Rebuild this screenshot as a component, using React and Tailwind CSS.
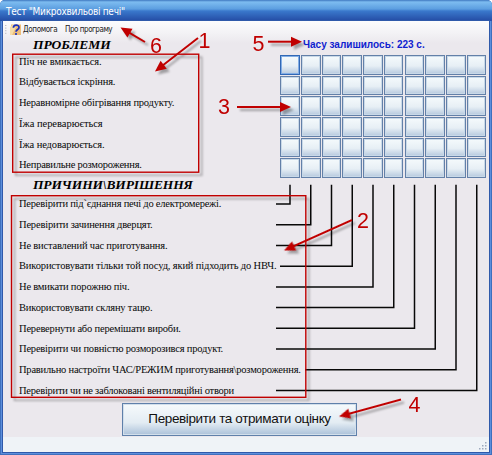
import React from "react";

const problems = [
  ["Піч не вмикається.", "tracking-[-0.08px]"],
  ["Відбувається іскріння.", "tracking-[-0.19px]"],
  ["Неравномірне обігрівання продукту.", "tracking-[-0.21px]"],
  ["Їжа переварюється", "tracking-[-0.03px]"],
  ["Їжа недоварюється.", "tracking-[-0.1px]"],
  ["Неправильне розмороження.", "tracking-[-0.23px]"],
];

const causes = [
  ["Перевірити під`єднання печі до електромережі.", "tracking-[-0.23px]"],
  ["Перевірити зачинення дверцят.", "tracking-[-0.19px]"],
  ["Не виставлений час приготування.", "tracking-[-0.19px]"],
  ["Використовувати тільки той посуд, який підходить до НВЧ.", "tracking-[-0.16px]"],
  ["Не вмикати порожню піч.", "tracking-[-0.2px]"],
  ["Використовувати скляну тацю.", "tracking-[-0.175px]"],
  ["Перевернути або перемішати вироби.", "tracking-[-0.19px]"],
  ["Перевірити чи повністю розморозився продукт.", "tracking-[-0.2px]"],
  ["Правильно настроїти ЧАС/РЕЖИМ приготування\\розмороження.", "tracking-[-0.21px]"],
  ["Перевірити чи не заблоковані вентиляційні отвори", "tracking-[-0.24px]"],
];

const lineStarts = [0, 0, 0, 4, 0, 0, 0, 0, 29, 0];

function List({ items }) {
  return (
    <ul className="pl-4 font-['Liberation_Serif',serif] text-[10.5px] text-[#080808]">
      {items.map(([text, tracking]) => (
        <li key={text} className={`flex h-[20.75px] items-center whitespace-nowrap ${tracking}`}>
          {text}
        </li>
      ))}
    </ul>
  );
}

function Cell({ focused }) {
  return (
    <button
      className={`border bg-linear-to-b from-[#f5fafc] via-[#e7eff5] via-55% to-[#b6c9de] ${
        focused
          ? "border-[#3168b5] shadow-[inset_0_0_0_1px_#83aee5]"
          : "border-[#6380a8] shadow-[inset_0_0_0_1px_#c9d9e8]"
      }`}
    />
  );
}

function Connectors() {
  return (
    <svg className="block" width="213" height="222" viewBox="276 184 213 222" fill="none" stroke="#080808" strokeWidth="1.5">
      {lineStarts.map((offset, i) => {
        const x = 290 + i * 20.75;
        const y = 204.1 + i * 20.7;
        return <path key={i} d={`M${x} 184.7V${y}H${276 + offset}`} />;
      })}
    </svg>
  );
}

function Arrow({ x1, y1, x2, y2 }) {
  const len = Math.hypot(x2 - x1, y2 - y1);
  const angle = (Math.atan2(y2 - y1, x2 - x1) * 180) / Math.PI;
  return (
    <g transform={`translate(${x1} ${y1}) rotate(${angle})`}>
      <path d={`M0 0H${len - 8}`} stroke="#c00000" strokeWidth="2" />
      <path d={`M${len} 0L${len - 11} -5V5Z`} fill="#c00000" />
    </g>
  );
}

function Annotations() {
  return (
    <svg className="pointer-events-none absolute inset-0" width="492" height="455" fill="none">
      <g className="[filter:drop-shadow(3px_3px_1.2px_rgba(0,0,0,0.32))]">
        <rect x="12.7" y="54.2" width="186" height="118" stroke="#c00000" strokeWidth="1.4" />
        <rect x="11.5" y="195.7" width="294.3" height="201.6" stroke="#c00000" strokeWidth="1.4" />
        <Arrow x1={198} y1={38} x2={155} y2={71.5} />
        <Arrow x1={145} y1={42} x2={120.5} y2={27.5} />
        <Arrow x1={352} y1={220} x2={284} y2={250.5} />
        <Arrow x1={237} y1={107} x2={291} y2={107} />
        <Arrow x1={401} y1={399.5} x2={339} y2={416.5} />
        <Arrow x1={268} y1={41.7} x2={302} y2={41.7} />
      </g>
      <g fill="#c00000" fontFamily="'Liberation Sans', sans-serif" fontSize="21.5">
        <text x="198.5" y="47.5">1</text>
        <text x="150" y="53">6</text>
        <text x="357" y="228">2</text>
        <text x="218" y="114">3</text>
        <text x="408.5" y="411.5">4</text>
        <text x="252.5" y="50.5">5</text>
      </g>
    </svg>
  );
}

export default function App() {
  return (
    <div className="h-[455px] w-[492px] bg-white">
      <div className="relative flex h-[455px] w-[492px] flex-col overflow-hidden rounded-t-[5px] bg-[#5d8fdc] shadow-[inset_0_0_0_1px_#3f70bd]">
        <header className="flex h-[21px] shrink-0 items-center bg-[linear-gradient(#3f78c0_0px,#7dbcf0_2px,#5c9ee0_9px,#3a78cc_11px,#2650a8_20px)] pt-[2px] pl-1.5 font-['DejaVu_Sans_Condensed','DejaVu_Sans',sans-serif] text-[10px] tracking-[-0.27px] whitespace-nowrap text-white">
          Тест "Микрохвильові печі"
        </header>
        <div className="mx-[3px] flex h-[431px] flex-col bg-[linear-gradient(#fcfcfd_0px,#f3f2f5_12px,#ebe8ed_22px)] shadow-[0_0_0_1px_#2f59aa]">
          <nav className="flex h-[17px] shrink-0 items-center pl-[2px] font-['DejaVu_Sans_Condensed','DejaVu_Sans',sans-serif] text-[8px] whitespace-nowrap text-[#222]">
            <svg width="16" height="15" viewBox="0 0 16 15" className="shrink-0">
              <path d="M.8 3v9" stroke="#aaa9b0" strokeWidth="1" strokeDasharray="1 1.6" />
              <path d="M6 2.5h10V13H6z" fill="#edbd79" />
              <path d="M5 5l4-3 2 3-4 8H5z" fill="#f7dda8" />
              <path d="M8.4 5.8C8.4 2.3 14 2.3 14 5.4c0 2-3 2.2-3 4.4" fill="none" stroke="#1930bd" strokeWidth="1.7" />
              <circle cx="11" cy="12" r="1.1" fill="#1930bd" />
            </svg>
            <span className="ml-[2px] w-[34px] tracking-[-0.36px]">Допомога</span>
            <span className="ml-[8px] tracking-[-0.47px]">Про програму</span>
          </nav>
          <main className="flex h-[363px] shrink-0">
            <section className="w-[273px] shrink-0">
              <h1 className="flex h-[13px] items-center pt-[2px] pl-[30px] font-['Liberation_Serif',serif] text-[13.5px] font-bold whitespace-nowrap text-black italic">
                ПРОБЛЕМИ
              </h1>
              <List items={problems} />
              <h1 className="flex h-[18px] items-center pt-px pl-[30px] font-['Liberation_Serif',serif] text-[13.5px] font-bold tracking-[-0.14px] whitespace-nowrap text-black italic">
                ПРИЧИНИ\ВИРІШЕННЯ
              </h1>
              <List items={causes} />
            </section>
            <section className="w-[213px] shrink-0">
              <p className="flex h-[17px] items-center pb-[4px] pl-[27px] font-['Liberation_Sans',sans-serif] text-[10px] font-bold whitespace-nowrap text-[#101ed0]">
                Часу залишилось: 223 с.
              </p>
              <div className="ml-[4.3px] grid h-[123px] w-[206px] grid-cols-10 grid-rows-6 gap-[1.2px]">
                {Array.from({ length: 60 }, (_, i) => (
                  <Cell key={i} focused={i === 0} />
                ))}
              </div>
              <div className="mt-[6px]">
                <Connectors />
              </div>
            </section>
          </main>
          <div className="flex h-[36px] shrink-0 items-center pl-[119px]">
            <button className="h-[33px] w-[235px] border border-[#5f80aa] bg-linear-to-b from-[#f6fafc] via-[#e3ecf3] via-60% to-[#abc1d9] font-['Liberation_Sans',sans-serif] text-[13.5px] tracking-[-0.37px] whitespace-nowrap text-[#111] shadow-[inset_0_0_0_1px_#d2dfeb]">
              Перевірити та отримати оцінку
            </button>
          </div>
          <footer className="flex flex-1 items-end justify-end bg-[#eff3f7] pr-[2px] pb-[2px]">
            <svg width="8" height="8" fill="#9ca9bd">
              <path d="M6 0h1.5v1.5H6zM3 3h1.5v1.5H3zM6 3h1.5v1.5H6zM0 6h1.5v1.5H0zM3 6h1.5v1.5H3zM6 6h1.5v1.5H6z" />
            </svg>
          </footer>
        </div>
        <Annotations />
      </div>
    </div>
  );
}
